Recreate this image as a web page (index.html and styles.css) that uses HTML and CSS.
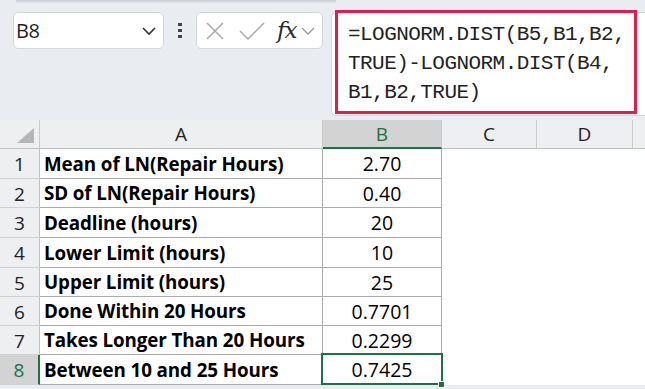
FILE: index.html
```html
<!DOCTYPE html>
<html>
<head>
<meta charset="utf-8">
<link rel="stylesheet" href="styles.css">
</head>
<body>
<div class="app">
  <div class="topshade"></div>
  <div class="fbar">
    <div class="namebox">
      <span class="nb-text">B8</span>
      <svg class="nb-chev" width="16" height="10" viewBox="0 0 16 10"><polyline points="2,2 8,8 14,2" fill="none" stroke="#333" stroke-width="1.6"/></svg>
    </div>
    <div class="dots"><span></span><span></span><span></span></div>
    <div class="fxbox">
      <svg class="ic-x" width="18" height="18" viewBox="0 0 18 18"><path d="M1 1 L17 17 M17 1 L1 17" stroke="#a8a8a8" stroke-width="1.5" fill="none"/></svg>
      <svg class="ic-check" width="26" height="18" viewBox="0 0 26 18"><polyline points="1,9 9,17 25,1" fill="none" stroke="#a8a8a8" stroke-width="1.5"/></svg>
      <span class="fx">fx</span>
      <svg class="ic-chev" width="14" height="8" viewBox="0 0 14 8"><polyline points="1,1 7,7 13,1" fill="none" stroke="#9a9a9a" stroke-width="1.4"/></svg>
    </div>
    <div class="formula">
      <div class="fline">=LOGNORM.DIST(B5,B1,B2,</div>
      <div class="fline">TRUE)-LOGNORM.DIST(B4,</div>
      <div class="fline">B1,B2,TRUE)</div>
      <div class="annot"></div>
    </div>
  </div>
  <div class="sheet">
    <div class="hd corner"><span class="tri"></span></div>
    <div class="hd col">A</div>
    <div class="hd col sel">B</div>
    <div class="hd col">C</div>
    <div class="hd col">D</div>
    <div class="hd col last"></div>

    <div class="rh">1</div><div class="ca">Mean of LN(Repair Hours)</div><div class="cb">2.70</div><div class="ce"></div><div class="ce"></div><div class="ce"></div>
    <div class="rh">2</div><div class="ca">SD of LN(Repair Hours)</div><div class="cb">0.40</div><div class="ce"></div><div class="ce"></div><div class="ce"></div>
    <div class="rh">3</div><div class="ca">Deadline (hours)</div><div class="cb">20</div><div class="ce"></div><div class="ce"></div><div class="ce"></div>
    <div class="rh">4</div><div class="ca">Lower Limit (hours)</div><div class="cb">10</div><div class="ce"></div><div class="ce"></div><div class="ce"></div>
    <div class="rh">5</div><div class="ca">Upper Limit (hours)</div><div class="cb">25</div><div class="ce"></div><div class="ce"></div><div class="ce"></div>
    <div class="rh">6</div><div class="ca">Done Within 20 Hours</div><div class="cb">0.7701</div><div class="ce"></div><div class="ce"></div><div class="ce"></div>
    <div class="rh">7</div><div class="ca">Takes Longer Than 20 Hours</div><div class="cb">0.2299</div><div class="ce"></div><div class="ce"></div><div class="ce"></div>
    <div class="rh sel">8</div><div class="ca">Between 10 and 25 Hours</div><div class="cb active">0.7425<span class="handle"></span></div><div class="ce"></div><div class="ce"></div><div class="ce"></div>
  </div>
</div>
</body>
</html>
```
FILE: styles.css
```css
* { box-sizing: border-box; }
html, body { margin: 0; padding: 0; background: #ffffff; }
.app { width: 645px; height: 389px; overflow: hidden; background: #e9ecf0; }
.topshade { height: 3px; margin-left: 16px; width: 320px; background: linear-gradient(#c9ccd0, #e3e6ea); }
.fbar { height: 117px; display: flex; align-items: flex-start; padding: 6px 0 0 13px; }
.namebox {
  margin-top: 3px; width: 151px; height: 37px; background: #fff;
  border: 1px solid #d3d6da; border-radius: 5px;
  display: flex; align-items: center; justify-content: space-between;
  padding: 0 6px 0 2px;
}
.nb-text { font-family: "Open Sans", "Noto Sans", sans-serif; font-size: 20px; color: #1f1f1f; letter-spacing: -0.5px; }
.nb-chev { display: block; }
.dots { width: 32px; height: 37px; margin-top: 3px; display: flex; flex-direction: column; align-items: center; justify-content: center; gap: 2.5px; }
.dots span { width: 3.5px; height: 3.5px; background: #444; display: block; }
.fxbox {
  margin-top: 3px; width: 127px; height: 37px; background: #fff;
  border: 1px solid #d3d6da; border-radius: 5px;
  display: flex; align-items: center; padding-left: 9px;
}
.ic-x { margin-right: 15px; }
.ic-check { margin-right: 12px; }
.fx { font-family: "DejaVu Serif", "Liberation Serif", serif; font-style: italic; font-size: 23px; color: #2a2a2a; margin-right: 5px; letter-spacing: -1px; line-height: 1; position: relative; top: 0px; }
.formula {
  position: relative; margin-left: 8px; margin-top: 3px; width: 314px; height: 104px;
  background: #fff; border: 1px solid #d3d6da; border-right: none; border-radius: 5px 0 0 5px;
  padding: 7px 0 0 16px;
  font-family: "Liberation Mono", "DejaVu Sans Mono", monospace; font-size: 21px; letter-spacing: -0.55px; color: #222;
}
.fline { height: 29px; line-height: 29px; white-space: nowrap; }
.annot { position: absolute; left: 3px; top: -3px; width: 302px; height: 104px; border: 3px solid #e31c4c; }
.sheet {
  display: grid;
  grid-template-columns: 40px 283px 119px 95px 96px 12px;
  grid-template-rows: 29px 30px 29px 30px 30px 29px 29px 29px 30px;
  background: #fff;
  font-family: "Open Sans", "Noto Sans", sans-serif;
}
.hd { background: #eeeff0; border-right: 1px solid #c9cacb; border-bottom: 1px solid #bfc0c1; display: flex; align-items: center; justify-content: center; font-size: 19px; color: #222; }
.corner { position: relative; }
.tri { position: absolute; right: 5px; bottom: 5px; width: 0; height: 0; border-left: 17px solid transparent; border-bottom: 15px solid #b5b5b5; }
.hd.sel { background: #d3d3d3; color: #1e7145; border-bottom: 2px solid #1e7145; }
.hd.last { border-right: none; }
.rh { background: #eeeff0; border-right: 1px solid #bfc0c1; border-bottom: 1px solid #d0d1d2; display: flex; align-items: center; justify-content: center; font-size: 19px; color: #222; padding-top: 1px; }
.rh.sel { background: #d3d3d3; color: #1e7145; border-right: 2px solid #1e7145; }
.ca { border-right: 1px solid #ababab; border-bottom: 1px solid #ababab; font-weight: 700; font-size: 18.8px; letter-spacing: -0.1px; color: #000; padding-left: 4px; display: flex; align-items: center; white-space: nowrap; }
.cb { position: relative; border-right: 1px solid #ababab; border-bottom: 1px solid #ababab; font-size: 19.5px; color: #000; display: flex; align-items: center; justify-content: center; }
.cb.active::before { content: ""; position: absolute; left: -2px; top: -2px; right: -2px; bottom: -1px; border: 2px solid #1e7145; }
.handle { position: absolute; right: -4px; bottom: -4px; width: 7px; height: 7px; background: #1e7145; border: 1px solid #fff; }
.ce { background: #fff; }
```
